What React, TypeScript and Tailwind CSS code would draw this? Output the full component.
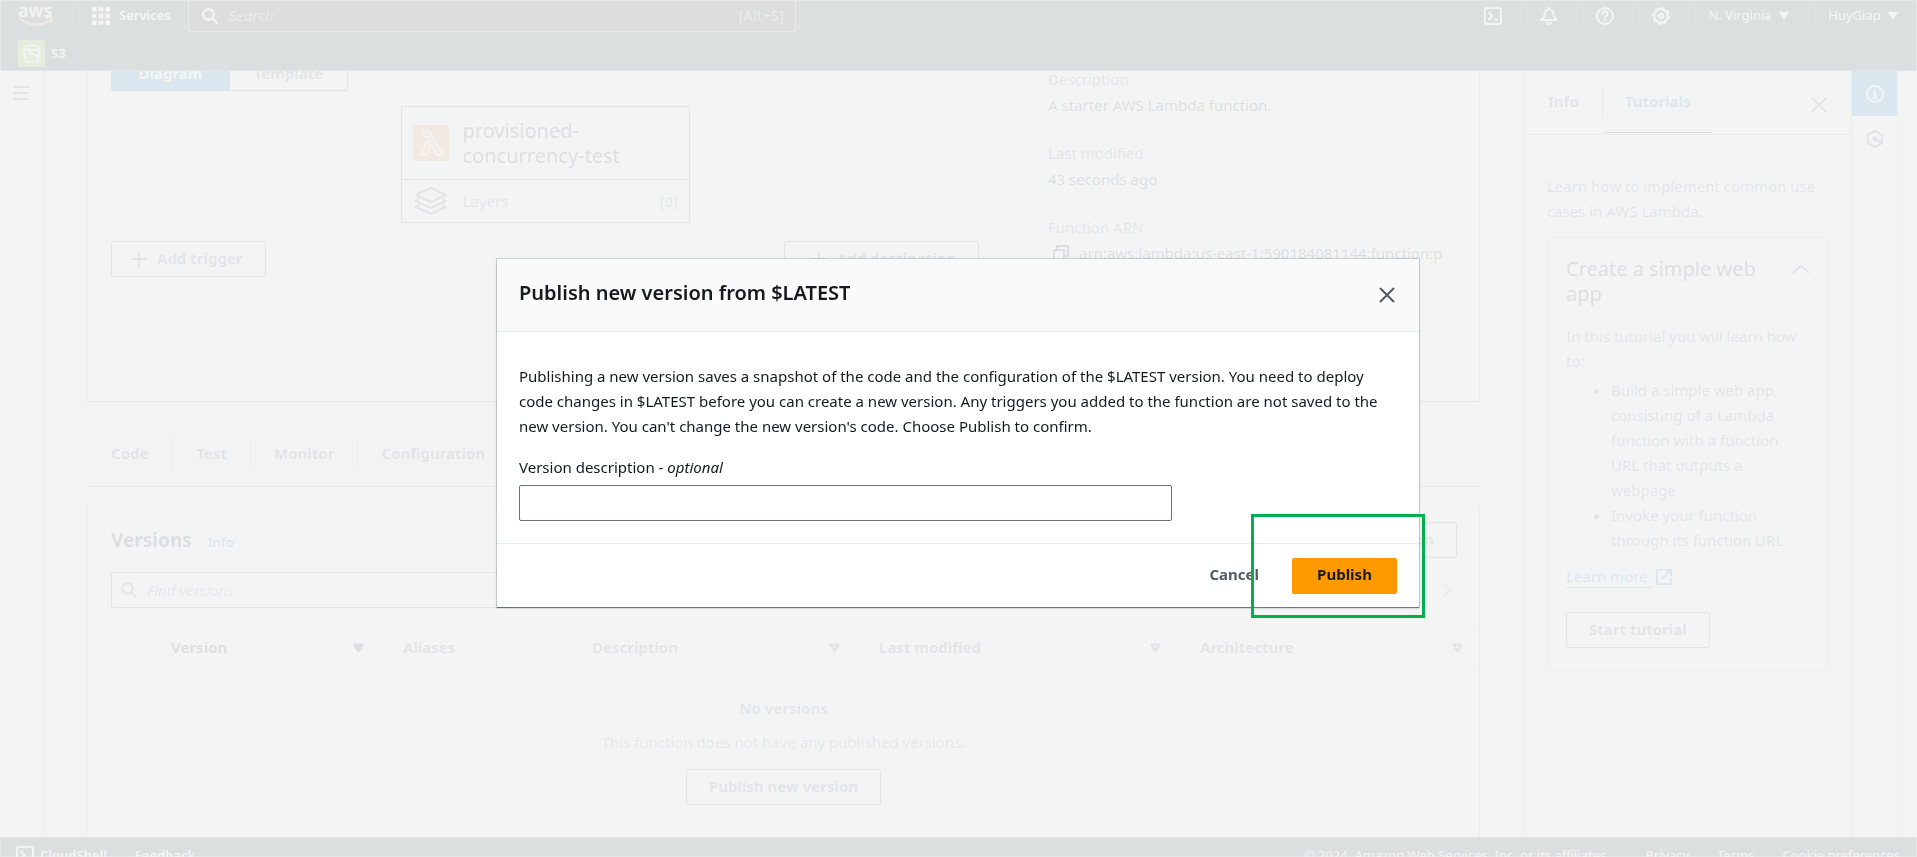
import type { ReactNode } from "react";

function CloudShellIcon({ className }: { className?: string }) {
  return (
    <svg viewBox="0 0 18 18" className={className} fill="none" stroke="currentColor" strokeWidth="2" aria-hidden="true">
      <rect x="1" y="1" width="16" height="16" rx="2" />
      <path d="M4.500 5l4 4-4 4M10 12.500h4" />
    </svg>
  );
}

function BellIcon() {
  return (
    <svg viewBox="0 0 18 18" className="size-[18px]" fill="none" stroke="currentColor" strokeWidth="2" strokeLinejoin="round" aria-hidden="true">
      <path d="M9 0v2M4.500 8c0-3.500 1.800-5.500 4.500-5.500s4.500 2 4.500 5.500c0 2 1 3.500 3.500 5H1C3.500 11.500 4.500 10 4.500 8z" />
      <path d="M6.500 14.500c.4 1.600 1.300 2.500 2.500 2.500s2.100-.9 2.500-2.500" />
    </svg>
  );
}

function HelpIcon() {
  return (
    <svg viewBox="0 0 18 18" className="size-[18px]" fill="none" stroke="currentColor" strokeWidth="2" aria-hidden="true">
      <circle cx="9" cy="9" r="8" />
      <path d="M6.300 7.200c0-1.600 1.100-2.600 2.700-2.600s2.700 1 2.700 2.400c0 1.900-2.700 1.900-2.700 4.200" />
      <path d="M9 12.400v2" />
    </svg>
  );
}

function GearIcon() {
  return (
    <svg viewBox="0 0 18 18" className="size-[18px]" fill="none" stroke="currentColor" aria-hidden="true">
      <circle cx="9" cy="9" r="6.800" strokeWidth="2.200" />
      <circle cx="9" cy="9" r="8.200" strokeWidth="1.600" strokeDasharray="3.220 3.220" />
      <circle cx="9" cy="9" r="2" strokeWidth="2.400" />
    </svg>
  );
}

function SearchIcon() {
  return (
    <svg viewBox="0 0 16 16" className="size-4 shrink-0" fill="none" stroke="currentColor" strokeWidth="2.400" aria-hidden="true">
      <circle cx="6.500" cy="6.500" r="5.300" />
      <path d="M10.500 10.500l5 5" />
    </svg>
  );
}

function CloseIcon() {
  return (
    <svg viewBox="0 0 16 16" className="size-4" fill="none" stroke="currentColor" strokeWidth="2" aria-hidden="true">
      <path d="M1 1l14 14M15 1L1 15" />
    </svg>
  );
}

function PlusIcon() {
  return (
    <svg viewBox="0 0 16 16" className="size-4" fill="none" stroke="currentColor" strokeWidth="2" aria-hidden="true">
      <path d="M8 0v16M0 8h16" />
    </svg>
  );
}

function Caret({ open = false }: { open?: boolean }) {
  return (
    <svg viewBox="0 0 11 10" className="h-[10px] w-[11px] shrink-0" stroke="currentColor" strokeWidth="2.400" strokeLinejoin="round" fill={open ? "none" : "currentColor"} aria-hidden="true">
      <path d="M1.500 1.800h8L5.500 8z" />
    </svg>
  );
}

function NavCaret() {
  return (
    <svg viewBox="0 0 10 8" className="h-2 w-[10px] shrink-0" fill="currentColor" aria-hidden="true">
      <path d="M0 0h10L5 8z" />
    </svg>
  );
}

function OutlineButton({ children, className = "" }: { children: ReactNode; className?: string }) {
  return (
    <button type="button" className={`flex h-9 items-center rounded-xs border border-[#545b64] bg-white pb-px font-bold text-[#545b64] ${className}`}>
      {children}
    </button>
  );
}

function NavCell({ label, children }: { label: string; children: ReactNode }) {
  return (
    <button type="button" aria-label={label} className="flex h-[25px] w-14 items-center justify-center border-r border-[#414d5c]">
      {children}
    </button>
  );
}

function Header() {
  return (
    <header className="h-[71px] shrink-0 overflow-hidden border-b border-[#545b64] bg-[#18242d] text-[13px] text-white">
      <div className="flex h-8 items-start justify-between">
        <div className="flex min-w-0">
          <a href="#home" aria-label="AWS home" className="mt-[3px] flex h-[25px] w-[73px] flex-col border-r border-[#414d5c] pl-[18px]">
            <span className="h-[14px] text-[18px] leading-[14px] font-semibold">aws</span>
            <svg viewBox="0 0 36 10" className="h-[10px] w-9" fill="none" stroke="#ff9900" strokeWidth="2" aria-hidden="true">
              <path d="M1 1.500c10 7.500 23 8 32 1.500" />
              <path d="M28 1.500c3-1 5.500-1 6 0s-.5 3-2 5" strokeWidth="1.500" />
            </svg>
          </a>
          <button type="button" className="mt-1 flex h-6 w-[115px] items-center gap-[9px] pl-[19px] font-semibold">
            <svg viewBox="0 0 18 18" className="size-[18px] shrink-0" fill="currentColor" aria-hidden="true">
              <path d="M0 0h4.500v4.500H0zM6.800 0h4.500v4.500H6.800zM13.500 0H18v4.500h-4.500zM0 6.800h4.500v4.500H0zM6.800 6.800h4.500v4.500H6.800zM13.500 6.800H18v4.500h-4.500zM0 13.500h4.500V18H0zM6.800 13.500h4.500V18H6.800zM13.500 13.500H18V18h-4.500z" />
            </svg>
            Services
          </button>
          <label className="flex h-8 w-[608px] items-center rounded-b-xs border border-t-0 border-[#8d9399] bg-[#0f1114] pr-[11px] pl-[13px]">
            <SearchIcon />
            <input type="search" aria-label="Search" placeholder="Search" className="ml-[11px] min-w-0 flex-1 bg-transparent text-[15px] italic placeholder:text-[#95a0a8]" />
            <span className="text-[15px] text-[#95a0a8]">[Alt+S]</span>
          </label>
        </div>
        <div className="mt-[3px] flex">
          <NavCell label="CloudShell"><CloudShellIcon className="size-[18px]" /></NavCell>
          <NavCell label="Notifications"><BellIcon /></NavCell>
          <NavCell label="Help"><HelpIcon /></NavCell>
          <NavCell label="Settings"><GearIcon /></NavCell>
          <button type="button" className="flex h-[25px] w-[120px] items-center justify-center gap-[7px] border-r border-[#414d5c]">
            N. Virginia <NavCaret />
          </button>
          <button type="button" className="flex h-[25px] w-[108px] items-center justify-center gap-[7px]">
            HuyGiap <NavCaret />
          </button>
        </div>
      </div>
      <a href="#s3" className="mt-2 ml-[18px] flex w-fit items-center gap-[6px] font-semibold">
        <span className="flex size-[27px] items-center justify-center bg-[#7aa116]">
          <svg viewBox="0 0 20 20" className="size-5" fill="none" stroke="white" strokeWidth="1.600" aria-hidden="true">
            <ellipse cx="9.500" cy="4" rx="8" ry="2.300" />
            <path d="M1.500 4l2 12.500c.5 2 11.500 2 12 0l2-12.500M9 9.500l9 3.500c1 .3.500-2-1-3" />
            <circle cx="9" cy="9.300" r="1" fill="white" />
          </svg>
        </span>
        S3
      </a>
    </header>
  );
}

function Detail({ term, children }: { term: string; children: ReactNode }) {
  return (
    <div className="mb-[22px]">
      <dt className="leading-[26px] text-[#545b64]">{term}</dt>
      <dd className="leading-[26px] text-[#16191f]">{children}</dd>
    </div>
  );
}

function Overview() {
  return (
    <section className="flex h-[331px] border-x border-b border-[#aab7b8] border-b-[#687078] bg-white">
      <div className="flex min-w-0 flex-1 flex-col items-start pr-11 pl-[23px]">
        <div className="-mt-4 flex h-9 font-bold">
          <button type="button" className="w-[119px] rounded-l-xs border border-[#004a70] bg-[#0073bb] text-white">Diagram</button>
          <button type="button" className="w-[118px] rounded-r-xs border border-l-0 border-[#545b64] text-[#545b64]">Template</button>
        </div>
        <div className="mt-[15px] w-[289px] self-center border border-[#545b64]">
          <div className="flex h-[73px] items-center border-b border-[#545b64] pl-[11px]">
            <svg viewBox="0 0 36 36" className="size-9 shrink-0" aria-hidden="true">
              <path fill="#ec7211" fillOpacity="0.8" d="M0 0h36v36H0z" />
              <path fill="none" stroke="white" strokeWidth="1.400" d="M10.500 6.500h6L26 25h3.500v5h-6l-8.300-18.500h-4.700zM13.800 16l3.500 7-4 7H7.500z" />
            </svg>
            <a href="#function" className="ml-[14px] w-[180px] text-[20px] leading-[25px] text-[#16191f]">provisioned-concurrency-test</a>
          </div>
          <div className="flex h-[42px] items-center pr-[11px] pl-[13px] text-[#545b64]">
            <svg viewBox="0 0 32 28" className="h-7 w-8" fill="none" stroke="currentColor" strokeWidth="2" strokeLinejoin="round" aria-hidden="true">
              <path d="M16 1l15 7-15 7L1 8z" />
              <path d="M5 12.200L1 14l15 7 15-7-4-1.800M5 18.200L1 20l15 7 15-7-4-1.800" />
            </svg>
            <span className="ml-4 flex-1">Layers</span>
            <span>(0)</span>
          </div>
        </div>
        <div className="mt-[18px] flex w-full justify-between">
          <OutlineButton className="gap-[10px] pr-[22px] pl-[19px]"><PlusIcon />Add trigger</OutlineButton>
          <OutlineButton className="gap-[10px] pr-[22px] pl-[26px]"><PlusIcon />Add destination</OutlineButton>
        </div>
      </div>
      <dl className="w-[456px] shrink-0 border-l border-[#eaeded] pl-6">
        <div className="-mt-[5px]">
          <Detail term="Description">A starter AWS Lambda function.</Detail>
          <Detail term="Last modified">43 seconds ago</Detail>
          <Detail term="Function ARN">
            <span className="flex items-center gap-[10px] pl-[5px]">
              <svg viewBox="0 0 16 16" className="size-4" fill="none" stroke="currentColor" strokeWidth="2" aria-hidden="true">
                <path d="M4 4V1h11v10h-3M1 5h10v10H1z" />
              </svg>
              arn:aws:lambda:us-east-1:590184081144:function:p
            </span>
          </Detail>
        </div>
      </dl>
    </section>
  );
}

function Tabs() {
  return (
    <nav className="mt-9 flex h-[49px] border-b border-[#879596] font-bold text-[#545b64]">
      <a href="#code" className="h-8 border-r border-[#aab7b8] px-6 leading-[30px]">Code</a>
      <a href="#test" className="h-8 border-r border-[#aab7b8] px-[23px] leading-[30px]">Test</a>
      <a href="#monitor" className="h-8 border-r border-[#aab7b8] px-[23px] leading-[30px]">Monitor</a>
      <a href="#configuration" className="h-8 px-[23px] leading-[30px]">Configuration</a>
    </nav>
  );
}

function HeadCell({ label, sort, active = false }: { label: string; sort?: "solid" | "open"; active?: boolean }) {
  return (
    <th scope="col" className="p-0">
      <div className={`flex h-6 items-center justify-between border-l border-[#eaeded] pr-4 pl-[22px] text-left font-bold ${active ? "text-[#16191f]" : "text-[#545b64]"}`}>
        {label}
        {sort && <Caret open={sort === "open"} />}
      </div>
    </th>
  );
}

function Versions() {
  return (
    <section className="mt-[18px] flex-1 border-x border-t border-[#aab7b8] border-t-[#d5dbdb] bg-white">
      <div className="flex h-[52px] items-end justify-between pr-[22px] pl-[23px]">
        <h2 className="flex items-baseline gap-4 pb-1 text-[19px] font-bold text-[#16191f]">
          Versions
          <a href="#info" className="text-[13px] font-semibold text-[#0073bb]">Info</a>
        </h2>
        <OutlineButton className="px-[22px]">Publish new version</OutlineButton>
      </div>
      <div className="mt-[14px] flex items-center justify-between pr-[26px] pl-[23px]">
        <label className="flex h-9 w-[640px] items-center gap-[10px] rounded-xs border border-[#545b64] px-[9px] text-[#687078]">
          <SearchIcon />
          <input type="search" aria-label="Find versions" placeholder="Find versions" className="min-w-0 flex-1 bg-transparent italic placeholder:text-[#687078]" />
        </label>
        <button type="button" aria-label="Next page" className="text-[#aab7b8]">
          <svg viewBox="0 0 12 16" className="h-4 w-3" fill="none" stroke="currentColor" strokeWidth="2" aria-hidden="true">
            <path d="M2 1l7.500 7L2 15" />
          </svg>
        </button>
      </div>
      <table className="mt-[17px] w-full table-fixed border-collapse">
        <colgroup>
          <col className="w-[60px]" />
          <col className="w-[232px]" />
          <col className="w-[189px]" />
          <col className="w-[287px]" />
          <col className="w-[321px]" />
          <col />
        </colgroup>
        <thead>
          <tr className="h-11 border-y border-[#d5dbdb] bg-[#fafafa]">
            <td />
            <HeadCell label="Version" sort="solid" active />
            <HeadCell label="Aliases" />
            <HeadCell label="Description" sort="open" />
            <HeadCell label="Last modified" sort="open" />
            <HeadCell label="Architecture" sort="open" />
          </tr>
        </thead>
        <tbody>
          <tr>
            <td colSpan={6} className="pt-[26px] text-center text-[#687078]">
              <p className="leading-[25px] font-bold">No versions</p>
              <p className="mt-[9px] leading-[25px]">This function does not have any published versions.</p>
              <OutlineButton className="mx-auto mt-[14px] px-[22px]">Publish new version</OutlineButton>
            </td>
          </tr>
        </tbody>
      </table>
    </section>
  );
}

function HelpPanel() {
  return (
    <aside className="w-[328px] shrink-0 overflow-hidden border-x border-[#aab7b8] bg-white text-[#545b64]">
      <div className="flex h-16 items-start border-b border-[#879596] font-bold">
        <a href="#info-tab" className="mt-[15px] h-8 border-r border-[#879596] px-[23px] leading-[30px]">Info</a>
        <a href="#tutorials" className="h-[62px] border-b border-[#16191f] px-[22px] pt-[15px] leading-[30px] text-[#0073bb]">Tutorials</a>
        <button type="button" aria-label="Close panel" className="mt-[26px] mr-6 ml-auto"><CloseIcon /></button>
      </div>
      <div className="px-[22px] leading-[25px]">
        <p className="mt-[39px]">Learn how to implement common use cases in AWS Lambda.</p>
        <section className="mt-[13px] rounded-xs border border-[#aab7b8] px-[18px] pt-[18px] pb-[22px]">
          <div className="flex items-start justify-between">
            <h3 className="w-[195px] text-[20px] leading-[25px] text-[#16191f]">Create a simple web app</h3>
            <button type="button" aria-label="Collapse" className="mt-2">
              <svg viewBox="0 0 18 10" className="h-[10px] w-[18px]" fill="none" stroke="currentColor" strokeWidth="2" aria-hidden="true">
                <path d="M1 9l8-7.500L17 9" />
              </svg>
            </button>
          </div>
          <p className="mt-[18px]">In this tutorial you will learn how to:</p>
          <ul className="mt-1 list-disc pl-[45px]">
            <li>Build a simple web app, consisting of a Lambda function with a function URL that outputs a webpage</li>
            <li>Invoke your function through its function URL</li>
          </ul>
          <a href="#learn" className="mt-[13px] flex w-fit items-center gap-1 text-[#0073bb]">
            <span className="border-b border-[#0073bb] pr-1 leading-[21px]">Learn more</span>
            <svg viewBox="0 0 16 16" className="size-4" fill="none" stroke="currentColor" strokeWidth="2" aria-hidden="true">
              <path d="M7 1H1v14h14V9.500M9 1h6v6M15 1L6 10" />
            </svg>
          </a>
          <OutlineButton className="mt-6 px-[22px]">Start tutorial</OutlineButton>
        </section>
      </div>
    </aside>
  );
}

function IconRail() {
  return (
    <div className="mr-[19px] w-[46px] shrink-0 border-r border-[#aab7b8] bg-white text-[#545b64]">
      <button type="button" aria-label="Info" className="flex h-[45px] w-full items-center justify-center bg-[#0073bb] text-white">
        <svg viewBox="0 0 18 18" className="size-[18px]" fill="none" stroke="currentColor" strokeWidth="2" aria-hidden="true">
          <circle cx="9" cy="9" r="8" />
          <path d="M9 4v2.300M7 8h2v4.500M6.500 13h5" />
        </svg>
      </button>
      <button type="button" aria-label="Tutorials" className="flex h-[45px] w-full items-center justify-center">
        <svg viewBox="0 0 18 18" className="size-[18px]" fill="none" stroke="currentColor" strokeWidth="2.200" aria-hidden="true">
          <path d="M9 1l7 4v8l-7 4-7-4V5z" />
          <path d="M9 9l6 3.500" />
          <circle cx="9" cy="9" r="1.500" fill="currentColor" />
        </svg>
      </button>
    </div>
  );
}

function Footer() {
  return (
    <footer className="flex h-5 shrink-0 items-start justify-between overflow-hidden border-t border-[#414d5c] bg-[#18242d] pr-[17px] pl-4 text-[13px] leading-5 text-white">
      <div className="mt-[7px] flex gap-7">
        <a href="#cloudshell" className="flex items-center gap-[6px] font-semibold"><CloudShellIcon className="size-[18px]" />CloudShell</a>
        <a href="#feedback" className="font-semibold">Feedback</a>
      </div>
      <div className="mt-[7px] flex gap-7">
        <span className="mr-2">© 2024, Amazon Web Services, Inc. or its affiliates.</span>
        <a href="#privacy">Privacy</a>
        <a href="#terms">Terms</a>
        <a href="#cookies">Cookie preferences</a>
      </div>
    </footer>
  );
}

function PublishDialog() {
  return (
    <div className="fixed inset-0 flex items-center justify-center border border-[#f2f4f4]/40 bg-[#f2f4f4]/90 pt-[9px] pr-px">
      <div role="dialog" aria-modal="true" aria-labelledby="dialog-title" className="relative w-full max-w-[922px] bg-white text-[#16191f] shadow-[0_1px_1px_0_#16191f80,0_0_1px_1px_#16191f26]">
        <div className="flex h-[73px] items-center justify-between border-b border-[#eaeded] bg-[#fafafa] pr-6 pl-[22px]">
          <h1 id="dialog-title" className="pb-1 text-[20px] font-semibold">Publish new version from $LATEST</h1>
          <button type="button" aria-label="Close dialog" className="text-[#545b64]"><CloseIcon /></button>
        </div>
        <div className="px-[22px] pt-8 pb-[22px]">
          <p className="leading-[25px]">
            Publishing a new version saves a snapshot of the code and the configuration of the $LATEST version. You need to deploy code changes in $LATEST before you can create a new version. Any triggers you added to the function are not saved to the new version. You can't change the new version's code. Choose Publish to confirm.
          </p>
          <label htmlFor="version-description" className="mt-4 block leading-[25px]">
            Version description - <i>optional</i>
          </label>
          <input id="version-description" type="text" className="mt-[5px] block h-9 w-[653px] max-w-full rounded-xs border border-[#687078] px-2" />
        </div>
        <div className="flex h-16 items-center justify-end gap-[33px] border-t border-[#eaeded] pr-[22px] font-bold">
          <button type="button" className="pb-0.5 text-[#545b64]">Cancel</button>
          <button type="button" className="h-9 w-[105px] rounded-xs bg-[#ff9900] pb-0.5">Publish</button>
        </div>
        <div className="pointer-events-none absolute -right-[6px] -bottom-[11px] h-[104px] w-[174px] border-3 border-[#00b050]" />
      </div>
    </div>
  );
}

export default function App() {
  return (
    <div className="flex h-screen flex-col overflow-hidden bg-[#f2f3f3] font-['Noto_Sans','Open_Sans',sans-serif] text-[15px]">
      <Header />
      <div className="flex min-h-0 flex-1">
        <div className="w-11 shrink-0 border-r border-[#aab7b8] bg-white">
          <button type="button" aria-label="Open navigation" className="mt-[15px] ml-[13px] text-[#545b64]">
            <svg viewBox="0 0 16 14" className="h-[14px] w-4" stroke="currentColor" strokeWidth="2" aria-hidden="true">
              <path d="M0 1h16M0 7h16M0 13h16" />
            </svg>
          </button>
        </div>
        <main className="flex min-w-0 flex-1 flex-col overflow-hidden pr-[44px] pl-[43px]">
          <Overview />
          <Tabs />
          <Versions />
        </main>
        <HelpPanel />
        <IconRail />
      </div>
      <Footer />
      <PublishDialog />
    </div>
  );
}
